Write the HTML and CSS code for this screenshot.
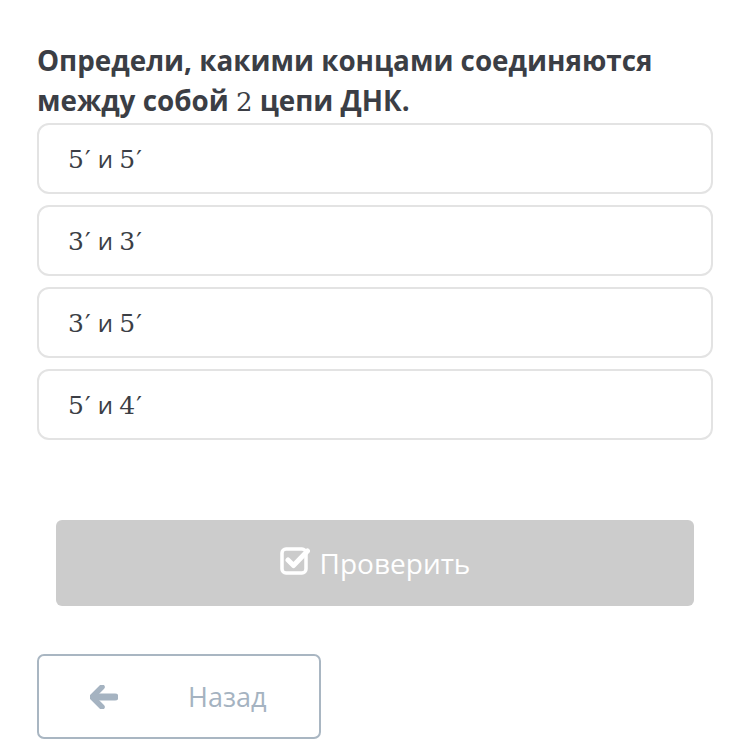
FILE: index.html
```html
<!DOCTYPE html>
<html lang="ru">
<head>
    <meta charset="UTF-8">
    <meta name="viewport" content="width=device-width, initial-scale=1.0">
    <title>Тест</title>
    <link rel="stylesheet" href="styles.css">
</head>
<body>

    <div class="task">
        <h1 class="question">Определи, какими концами соединяются между собой <span class="math">2</span> цепи ДНК.</h1>

        <div class="answers">
            <div class="answer"><span><span class="math">5′</span> и <span class="math">5′</span></span></div>
            <div class="answer"><span><span class="math">3′</span> и <span class="math">3′</span></span></div>
            <div class="answer"><span><span class="math">3′</span> и <span class="math">5′</span></span></div>
            <div class="answer"><span><span class="math">5′</span> и <span class="math">4′</span></span></div>
        </div>

        <div class="check-wrap">
            <button class="check" disabled>
                <svg class="check-icon" width="30" height="30" viewBox="0 0 30 30">
                    <rect x="2" y="4" width="24" height="24" rx="4" fill="none" stroke="#fff" stroke-width="3.5"/>
                    <path d="M8 15 L13.5 20.5 L27.5 6" fill="none" stroke="#fff" stroke-width="5" stroke-linecap="round" stroke-linejoin="round"/>
                </svg>
                <span>Проверить</span>
            </button>
        </div>

        <button class="back">
            <svg class="back-icon" width="28" height="24" viewBox="0 0 28 24">
                <path d="M12 2 L2 12 L12 22" fill="none" stroke="#a5b3c1" stroke-width="5.5" stroke-linecap="round" stroke-linejoin="round"/>
                <path d="M4 12 H25" fill="none" stroke="#a5b3c1" stroke-width="7" stroke-linecap="round"/>
            </svg>
            <span>Назад</span>
        </button>
    </div>

</body>
</html>
```

FILE: styles.css
```css
body {
    margin: 0;
    background-color: #fff;
    font-family: "Open Sans", "Noto Sans", sans-serif;
}
.task {
    width: 676px;
    padding: 40px 37px 0;
}
.question {
    margin: 0;
    font-size: 27.8px;
    line-height: 40px;
    font-weight: 700;
    color: #3b3e45;
}
.math {
    font-family: "DejaVu Serif", "Liberation Serif", serif;
    font-weight: 400;
}
.question .math {
    font-size: 26px;
}
.answers {
    display: flex;
    flex-direction: column;
    gap: 11px;
    margin-top: 1px;
}
.answer {
    height: 67px;
    display: flex;
    align-items: center;
    padding: 0 29px;
    border: 2px solid #e3e3e3;
    border-radius: 12px;
    font-size: 24px;
    color: #3b3e45;
}
.answer .math {
    font-size: 25px;
    letter-spacing: 1px;
}
.check-wrap {
    padding: 80px 19px 0;
}
.check {
    width: 100%;
    height: 86px;
    display: flex;
    align-items: center;
    justify-content: center;
    gap: 10px;
    border: none;
    border-radius: 6px;
    background-color: #cccccc;
    color: #fff;
    font-family: inherit;
    font-size: 28px;
    padding: 0;
}
.check-icon {
    flex-shrink: 0;
    margin-top: -6px;
}
.back {
    margin-top: 48px;
    width: 284px;
    height: 85px;
    display: flex;
    align-items: center;
    padding: 0 0 0 51px;
    border: 2px solid #a9b6c2;
    border-radius: 7px;
    background-color: #fff;
    color: #a5b3c1;
    font-family: inherit;
    font-size: 27px;
    cursor: pointer;
}
.back-icon {
    flex-shrink: 0;
}
.back span {
    margin-left: 70px;
}
```
